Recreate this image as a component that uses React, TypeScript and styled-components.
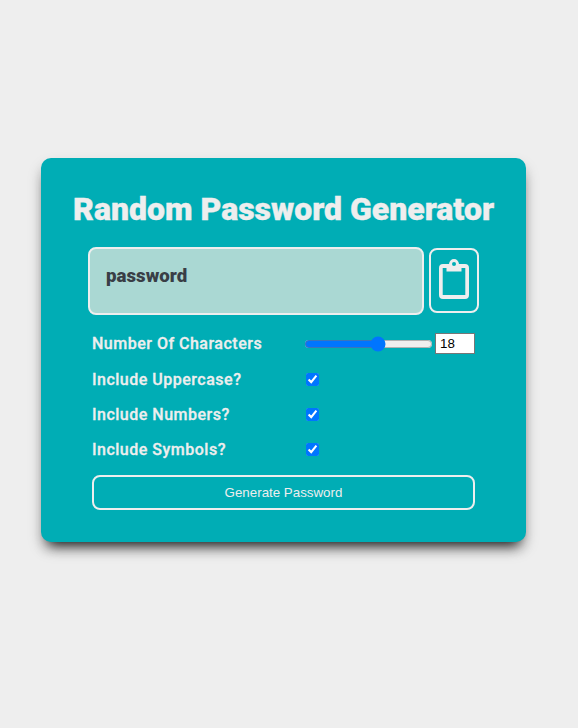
import React, { useState } from "react";
import styled, { createGlobalStyle } from "styled-components";

const GlobalStyle = createGlobalStyle`
  * { box-sizing: border-box; }
  body { margin: 0; background: #eeeeee; font-family: Roboto, sans-serif; }
`;

const Page = styled.main`
  min-height: 728px;
  padding: 158px 52px 0 41px;
`;

const Card = styled.section`
  width: 485px;
  height: 384px;
  padding-top: 32px;
  border-radius: 10px;
  background: #00adb5;
  color: #eeeeee;
  box-shadow: 0 10px 13px -7px rgba(0, 0, 0, 0.9), 0 8px 15px -1px rgba(0, 0, 0, 0.22);
`;

const Title = styled.h1`
  margin: 0;
  height: 57px;
  font-size: 32px;
  line-height: 38px;
  font-weight: 900;
  -webkit-text-stroke: 0.4px currentColor;
  text-align: center;
  white-space: nowrap;
`;

const Output = styled.div`
  display: flex;
  align-items: flex-start;
  gap: 5px;
  margin-left: 47px;
  height: 78px;
`;

const Display = styled.div`
  width: 336px;
  height: 68px;
  padding: 16px;
  border: 2px solid #eeeeee;
  border-radius: 8px;
  background: #aad8d3;
  color: #393e46;
  font-size: 18.72px;
  line-height: 22px;
  font-weight: 900;
`;

const CopyButton = styled.button`
  display: flex;
  justify-content: center;
  width: 50px;
  height: 65px;
  margin: 1px 0 0;
  padding: 9px 0 0;
  border: 2px solid #eeeeee;
  border-radius: 8px;
  background: transparent;
  color: #eeeeee;
`;

const Form = styled.form`
  width: 383px;
  margin-left: 51px;
`;

const Row = styled.div<{ $height: number }>`
  display: grid;
  grid-template-columns: 213px 170px;
  align-items: center;
  height: ${(p) => p.$height}px;
`;

const Label = styled.label`
  font-size: 16px;
  line-height: 19px;
  font-weight: 500;
  letter-spacing: 0.5px;
  -webkit-text-stroke: 0.3px currentColor;
`;

const SliderGroup = styled.div`
  display: flex;
  align-items: center;
`;

const Slider = styled.input`
  width: 129px;
  height: 16px;
  margin: 0 2px 0 -1px;
`;

const NumberField = styled.input`
  width: 40px;
  height: 21px;
  padding: 1px 2px 1px 4px;
  border: 1px solid #767676;
  background: #ffffff;
  color: #000000;
  font: 13.333px "Liberation Sans", Arial, sans-serif;
`;

const Checkbox = styled.input`
  width: 13px;
  height: 13px;
  margin: 0 0 0 1px;
`;

const GenerateButton = styled.button`
  display: block;
  width: 383px;
  height: 35px;
  margin-top: 8px;
  padding: 0;
  border: 2px solid #eeeeee;
  border-radius: 8px;
  background: transparent;
  color: #eeeeee;
  font: 13.333px "Liberation Sans", Arial, sans-serif;
`;

function ClipboardIcon() {
  return (
    <svg width="30" height="41" viewBox="0 0 30 41" fill="currentColor" aria-hidden="true">
      <path
        fillRule="evenodd"
        d="M4 5H10C10.3 2 12.300 0 15 0S19.700 2 20 5H26Q30 5 30 9V36Q30 40 26 40H4Q0 40 0 36V9Q0 5 4 5ZM3.700 9V36H26.300V9H22.500V12.500H7.500V9ZM15 3A2 2 0 1 0 15 7A2 2 0 1 0 15 3Z"
      />
    </svg>
  );
}

const options = ["Uppercase", "Numbers", "Symbols"];

export default function App() {
  const [length, setLength] = useState(18);
  const update = (e: React.ChangeEvent<HTMLInputElement>) => setLength(Number(e.target.value));

  return (
    <>
      <GlobalStyle />
      <Page>
        <Card>
          <Title>Random Password Generator</Title>
          <Output>
            <Display>password</Display>
            <CopyButton type="button" aria-label="Copy password">
              <ClipboardIcon />
            </CopyButton>
          </Output>
          <Form onSubmit={(e) => e.preventDefault()}>
            <Row $height={37}>
              <Label htmlFor="length">Number Of Characters</Label>
              <SliderGroup>
                <Slider id="length" type="range" min={1} max={30} value={length} onChange={update} />
                <NumberField type="number" min={1} max={30} value={length} onChange={update} />
              </SliderGroup>
            </Row>
            {options.map((name) => (
              <Row key={name} $height={35}>
                <Label htmlFor={name}>Include {name}?</Label>
                <Checkbox id={name} type="checkbox" defaultChecked />
              </Row>
            ))}
            <GenerateButton type="submit">Generate Password</GenerateButton>
          </Form>
        </Card>
      </Page>
    </>
  );
}
